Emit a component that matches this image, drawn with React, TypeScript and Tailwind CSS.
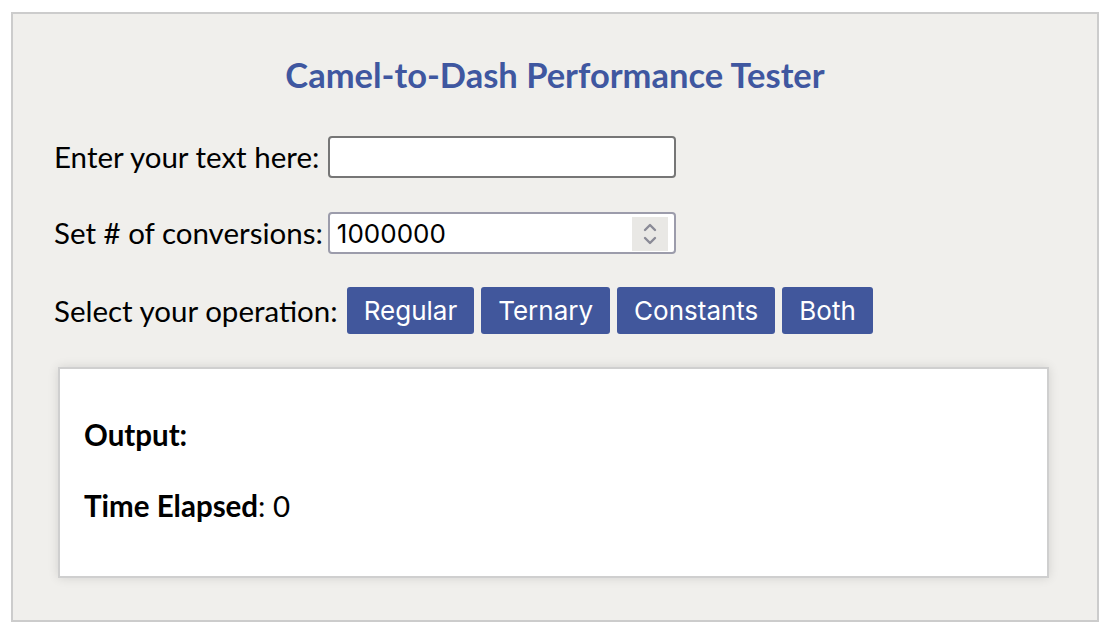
import React from "react";

const labelFont = { fontFamily: "Lato, 'Open Sans', sans-serif" };

export default function App() {
  return (
    <div className="bg-white w-[1110px] h-[638px] pt-[12px] pl-[11px]" style={labelFont}>
      <div className="w-[1088px] h-[610px] border-2 border-[#cccccc] bg-[#f0efec] flex flex-col">
        <h1 className="text-center text-[#3f57a0] font-bold text-[34.5px] mt-[41px] leading-[40px] font-['Lato',sans-serif]">
          Camel-to-Dash Performance Tester
        </h1>
        <div className="pl-[41px] mt-[40px] flex flex-col">
          <div className="flex items-center h-[44px]">
            <label className="text-[29.5px] text-black mr-[9px] leading-none">Enter your text here:</label>
            <input
              type="text"
              className="w-[348px] h-[42px] bg-white border-2 border-[#767676] rounded-[4px] outline-none px-2"
            />
          </div>
          <div className="flex items-center h-[44px] mt-[32px]">
            <label className="text-[29.5px] text-black mr-[5px] leading-none">Set # of conversions:</label>
            <div className="relative w-[348px] h-[42px] bg-white border-2 border-[#9c9cab] rounded-[4px]">
              <input
                type="text"
                defaultValue="1000000"
                className="w-full h-full bg-transparent outline-none pl-[7px] text-[26px] text-black font-['Inter',sans-serif]"
              />
              <div className="absolute right-[6px] top-[3px] w-[36px] h-[34px] bg-[#e9e8e5] flex flex-col items-center justify-center">
                <svg width="16" height="26" viewBox="0 0 16 26" fill="none" stroke="#8a8a96" strokeWidth="2.4" strokeLinecap="round" strokeLinejoin="round">
                  <path d="M3 9 L8 4 L13 9" />
                  <path d="M3 17 L8 22 L13 17" />
                </svg>
              </div>
            </div>
          </div>
          <div className="flex items-center h-[47px] mt-[32px]">
            <label className="text-[29.5px] text-black mr-[9px] leading-none">Select your operation:</label>
            <div className="flex gap-[7px] font-['Inter',sans-serif]">
              {["Regular", "Ternary", "Constants", "Both"].map((b) => (
                <button
                  key={b}
                  className="h-[47px] px-[17px] bg-[#41579c] text-white text-[26px] rounded-[3px] leading-none"
                >
                  {b}
                </button>
              ))}
            </div>
          </div>
        </div>
        <div className="ml-[45px] mt-[33px] w-[991px] h-[211px] bg-white border-2 border-[#cfcfcf] shadow-[0_0_10px_rgba(0,0,0,0.12)] pl-[24px] pt-[48px]">
          <div className="text-[29.5px] font-bold text-black leading-[36px]">Output:</div>
          <div className="text-[29.5px] text-black leading-[36px] mt-[35px]">
            <span className="font-bold">Time Elapsed</span>: 0
          </div>
        </div>
      </div>
    </div>
  );
}
